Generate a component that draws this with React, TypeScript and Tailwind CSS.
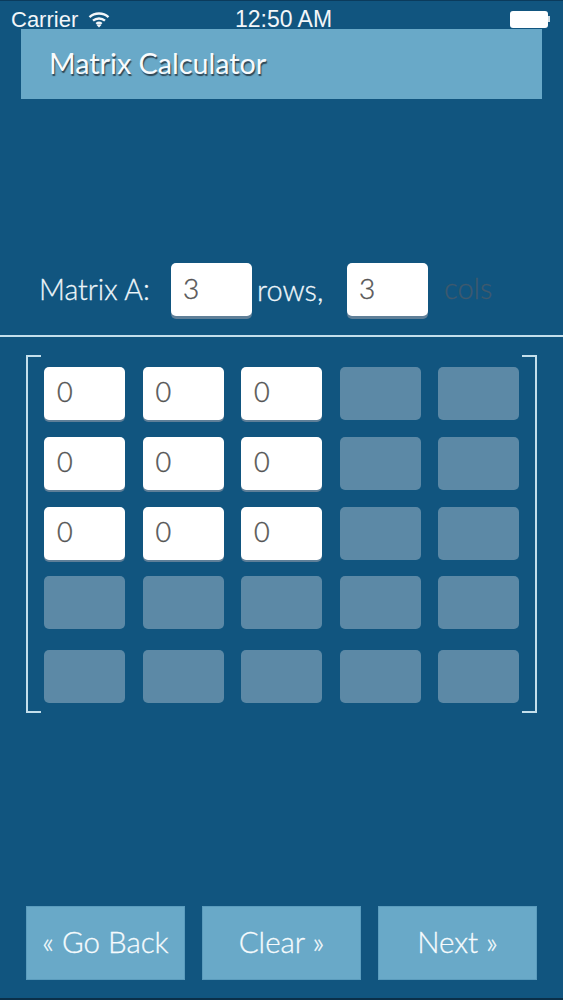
import React from "react";

function WifiIcon() {
  return (
    <svg width="22" height="17" viewBox="0 0 22 16" fill="none" stroke="currentColor" strokeWidth="2.4" strokeLinecap="butt">
      <path d="M1.5 5.6C6.8 0.8 15.2 0.8 20.5 5.6" />
      <path d="M5 9.2C8.4 6.2 13.6 6.2 17 9.2" />
      <path d="M8.3 12.4C9.9 11.1 12.1 11.1 13.7 12.4" />
      <path d="M11 16l-2.4-2.6c1.4-.9 3.4-.9 4.8 0z" fill="currentColor" stroke="none" />
    </svg>
  );
}

function Cell({ value, active }: { value?: string; active: boolean }) {
  return (
    <div
      className={
        active
          ? "w-[81px] h-[53px] rounded-[5px] bg-white shadow-[0_2px_0_#5f7f98] flex items-center pl-[13px] pb-[2px] text-[27px] font-light [-webkit-text-stroke:0.4px] text-[#555555]"
          : "w-[81px] h-[53px] rounded-[5px] bg-[#5c89a6]"
      }
    >
      {value}
    </div>
  );
}

function Row({ filled, className }: { filled: boolean; className: string }) {
  return (
    <div className={"flex justify-between " + className}>
      {[0, 1, 2, 3, 4].map((i) => (
        <Cell key={i} active={filled && i < 3} value={filled && i < 3 ? "0" : undefined} />
      ))}
    </div>
  );
}

function SizeInput() {
  return (
    <div className="w-[81px] h-[53px] rounded-[5px] bg-white shadow-[0_3px_0_#5f7f98] flex items-center pl-[12px] pb-[3px] text-[28px] font-light [-webkit-text-stroke:0.4px] text-[#555555]">
      3
    </div>
  );
}

function Btn({ label }: { label: string }) {
  return (
    <div className="w-[159px] h-[74px] bg-[#69a9c8] border border-[#5b9cbd] flex items-center justify-center pb-[2px] text-[29.5px] font-light [-webkit-text-stroke:0.3px] text-[#f6fbfd]">
      {label}
    </div>
  );
}

export default function App() {
  return (
    <div className="relative w-[563px] h-[1000px] bg-[#11557f] flex flex-col font-['Lato','Liberation_Sans',sans-serif] text-white overflow-hidden border-t-[1px] border-b-[2px] border-t-[#0b3b5c] border-b-[#0a2f49]">
      <div className="h-[28px] pt-[8px] flex items-center justify-between pl-[11px] pr-[13px] text-[#f2f6f9] font-['Liberation_Sans',sans-serif] text-[22px]">
        <div className="flex items-center gap-[10px] w-[200px]">
          <span>Carrier</span>
          <WifiIcon />
        </div>
        <span className="font-medium text-[23px] ml-[6px]">12:50 AM</span>
        <div className="w-[200px] flex justify-end items-center">
          <div className="w-[38px] h-[17px] rounded-[3px] bg-white" />
          <div className="w-[2px] h-[6px] bg-white/80" />
        </div>
      </div>

      <div className="mx-[21px] h-[70px] bg-[#69a9c8] flex items-center pl-[28px] text-[28.7px] text-[#f8fbfd] [text-shadow:1px_2px_1px_#2f4654]">
        Matrix Calculator
      </div>

      <div className="mt-[164px] h-[53px] flex items-center pl-[39px] text-[29px] font-light [-webkit-text-stroke:0.3px] text-[#eef6fa]">
        <span className="w-[132px] text-[28.5px]">Matrix A:</span>
        <SizeInput />
        <span className="ml-[5px] w-[90px]">rows,</span>
        <SizeInput />
        <span className="ml-[16px] text-[#3f5a6e] pb-[3px]">cols</span>
      </div>

      <div className="mt-[19px] h-[2px] bg-[#c4dfec]" />

      <div className="relative mx-[26px] mt-[18px] h-[358px] px-[18px] pt-[12px]">
        <div className="absolute left-0 top-0 bottom-0 w-[15px] border-l-[2px] border-t-[2px] border-b-[2px] border-[#c4dfec]" />
        <div className="absolute right-0 top-0 bottom-0 w-[15px] border-r-[2px] border-t-[2px] border-b-[2px] border-[#c4dfec]" />
        <Row filled className="" />
        <Row filled className="mt-[17px]" />
        <Row filled className="mt-[17px]" />
        <Row filled={false} className="mt-[16px]" />
        <Row filled={false} className="mt-[21px]" />
      </div>

      <div className="mt-[193px] mx-[26px] flex justify-between">
        <Btn label="« Go Back" />
        <Btn label="Clear »" />
        <Btn label="Next »" />
      </div>
    </div>
  );
}
